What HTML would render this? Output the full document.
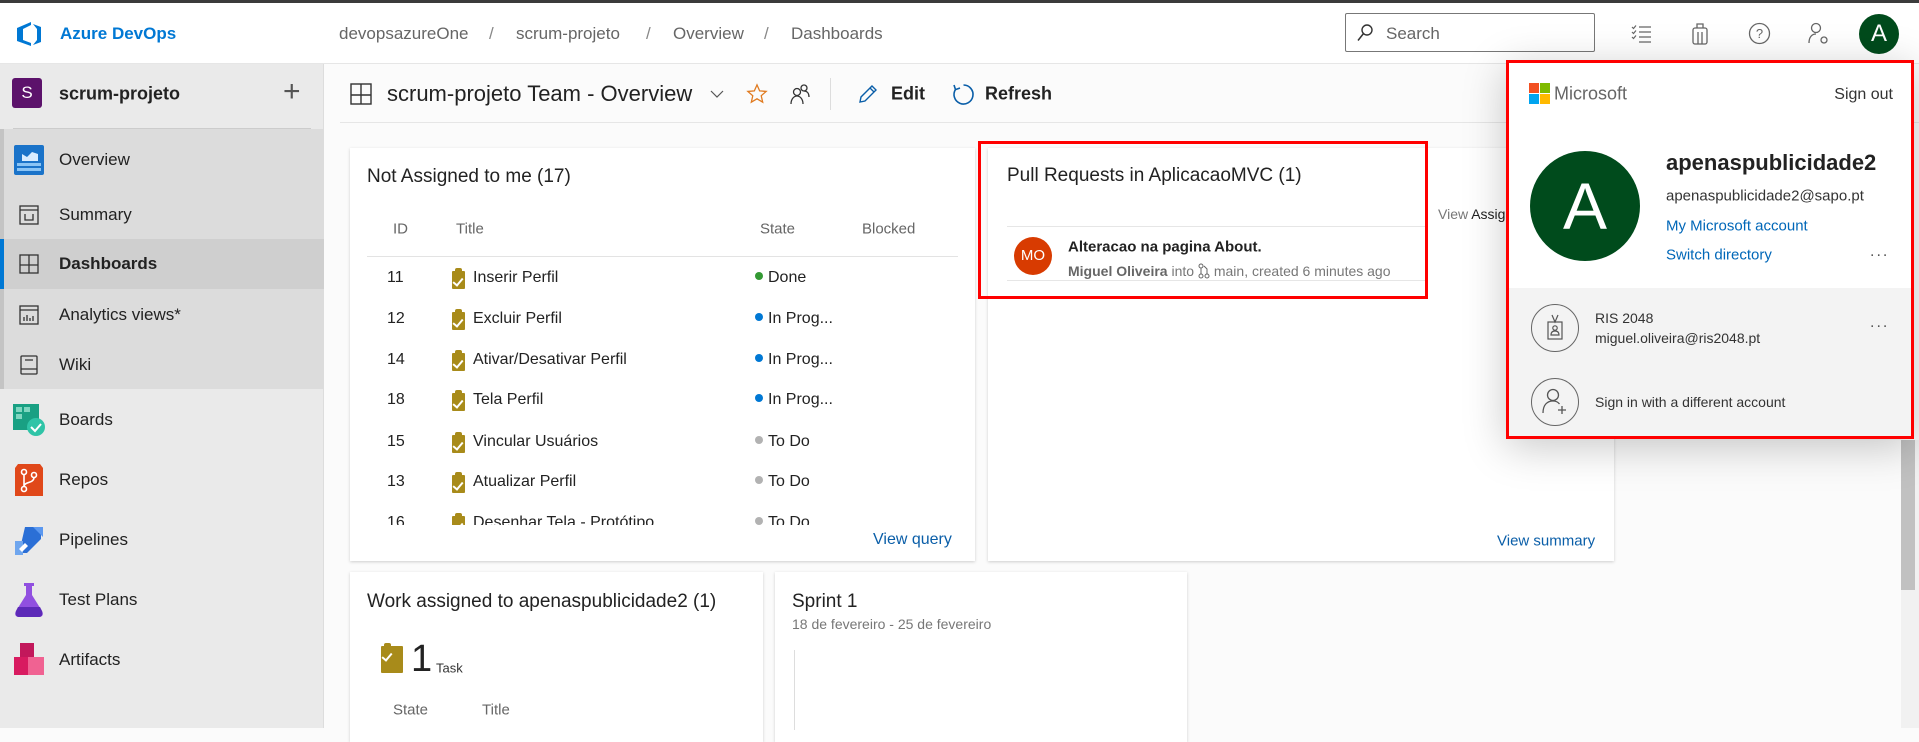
<!DOCTYPE html>
<html><head><meta charset="utf-8"><style>
*{margin:0;padding:0;box-sizing:border-box}
body{width:1919px;height:728px;overflow:hidden;position:relative;background:#fbfbfb;font-family:"Liberation Sans",sans-serif;color:#323130}
.a{position:absolute;white-space:nowrap}
.vc{transform:translateY(-50%)}
.card{position:absolute;background:#fff;box-shadow:0 1px 3px rgba(0,0,0,.18)}
.nav{position:absolute;left:59px;font-size:17px;color:#222;transform:translateY(-50%)}
.row{position:absolute;font-size:16px;color:#222;transform:translateY(-50%)}
.dot{display:inline-block;width:8px;height:8px;border-radius:50%;margin-right:5px;vertical-align:2px}
.chk{position:absolute;width:13px;height:18px;background:#a88b1a;border-radius:1px}
.chk:before{content:"";position:absolute;left:3px;top:-3px;width:7px;height:5px;background:#a88b1a;border-radius:2px 2px 0 0}
.chk:after{content:"";position:absolute;left:3px;top:5px;width:4px;height:8px;border:solid #fff;border-width:0 2px 2px 0;transform:rotate(40deg)}
</style></head><body>
<!-- top dark line -->
<div class="a" style="left:0;top:0;width:1919px;height:3px;background:#3b3b3b"></div>
<!-- header -->
<div class="a" style="left:0;top:3px;width:1919px;height:61px;background:#fff;border-bottom:1px solid #e6e6e6"></div>
<svg class="a" style="left:15px;top:21px" width="28" height="26" viewBox="0 0 28 26"><path d="M2 7 L16 1 L16 4 L8 8 L8 19 L16 22 L16 25 L2 20 Z" fill="#0078d4"/><path d="M18 3 L26 6 L26 21 L18 24 L22 19 L22 8 Z" fill="#0078d4"/></svg>
<div class="a vc" style="left:60px;top:34px;font-size:17px;font-weight:bold;color:#0078d4">Azure DevOps</div>
<div class="a vc" style="left:339px;top:34px;font-size:17px;color:#666">devopsazureOne</div>
<div class="a vc" style="left:489px;top:34px;font-size:17px;color:#888">/</div>
<div class="a vc" style="left:516px;top:34px;font-size:17px;color:#666">scrum-projeto</div>
<div class="a vc" style="left:646px;top:34px;font-size:17px;color:#888">/</div>
<div class="a vc" style="left:673px;top:34px;font-size:17px;color:#666">Overview</div>
<div class="a vc" style="left:764px;top:34px;font-size:17px;color:#888">/</div>
<div class="a vc" style="left:791px;top:34px;font-size:17px;color:#666">Dashboards</div>
<div class="a" style="left:1345px;top:13px;width:250px;height:39px;border:1px solid #777;border-radius:2px;background:#fff"></div>
<svg class="a" style="left:1357px;top:24px" width="16" height="18" viewBox="0 0 16 18"><circle cx="10" cy="6" r="5" fill="none" stroke="#333" stroke-width="1.4"/><path d="M6.5 9.5 L1 16.5" stroke="#333" stroke-width="1.5"/></svg>
<div class="a vc" style="left:1386px;top:34px;font-size:17px;color:#666">Search</div>
<svg class="a" style="left:1631px;top:24px" width="22" height="20" viewBox="0 0 22 20"><g stroke="#666" stroke-width="1.2" fill="none"><path d="M8 3h12M8 8h12M8 13h12M8 18h12"/><path d="M1 3l1.5 1.5L5 1.5M1 8l1.5 1.5L5 6.5M1 13l1.5 1.5L5 11.5"/></g></svg>
<svg class="a" style="left:1691px;top:22px" width="18" height="24" viewBox="0 0 18 24"><g stroke="#666" stroke-width="1.3" fill="none"><rect x="2" y="6" width="14" height="16" rx="2"/><path d="M6 6V2h6v4M7 22V10M11 22V10"/></g></svg>
<svg class="a" style="left:1748px;top:22px" width="23" height="23" viewBox="0 0 23 23"><circle cx="11.5" cy="11.5" r="10" fill="none" stroke="#666" stroke-width="1.3"/><text x="11.5" y="16" font-size="13" text-anchor="middle" fill="#666" font-family="Liberation Sans">?</text></svg>
<svg class="a" style="left:1808px;top:22px" width="22" height="24" viewBox="0 0 22 24"><g stroke="#666" stroke-width="1.3" fill="none"><circle cx="8" cy="6" r="4.5"/><path d="M1 21c0-6 3-9 7-9"/><circle cx="16" cy="18" r="3"/></g></svg>
<div class="a" style="left:1859px;top:14px;width:40px;height:40px;border-radius:50%;background:#004b1c;color:#fff;font-size:24px;text-align:center;line-height:40px">A</div>
<!-- sidebar -->
<div class="a" style="left:0;top:64px;width:324px;height:664px;background:#eaeaea;border-right:1px solid #ddd"></div>
<div class="a" style="left:12px;top:78px;width:30px;height:30px;border-radius:3px;background:#5c126b;color:#fff;font-size:17px;text-align:center;line-height:30px">S</div>
<div class="a vc" style="left:59px;top:94px;font-size:18px;font-weight:bold;color:#222">scrum-projeto</div>
<div class="a vc" style="left:283px;top:92px;font-size:30px;font-weight:300;color:#555">+</div>
<div class="a" style="left:13px;top:128px;width:298px;height:1px;background:#ccc"></div>
<div class="a" style="left:0;top:129px;width:324px;height:260px;background:#dcdcdc"></div>
<div class="a" style="left:0;top:129px;width:4px;height:260px;background:#c4c4c4"></div>
<div class="a" style="left:0;top:239px;width:324px;height:50px;background:#cfcfcf"></div>
<div class="a" style="left:0;top:239px;width:4px;height:50px;background:#0078d4"></div>
<svg class="a" style="left:14px;top:145px" width="30" height="30" viewBox="0 0 30 30"><rect x="0" y="0" width="30" height="30" rx="2" fill="#1a73c9"/><rect x="3" y="18" width="24" height="3" fill="#8ac4f5"/><rect x="3" y="23" width="24" height="3" fill="#8ac4f5"/><path d="M8 16V9l5 3 5-5 6 2v7z" fill="#d8ecff"/></svg>
<div class="nav" style="top:160px">Overview</div>
<svg class="a" style="left:19px;top:205px" width="20" height="20" viewBox="0 0 20 20"><g stroke="#333" stroke-width="1.3" fill="none"><rect x="1" y="1" width="18" height="18"/><path d="M1 5h18M6 9v6h8V9"/></g></svg>
<div class="nav" style="top:215px">Summary</div>
<svg class="a" style="left:19px;top:254px" width="20" height="20" viewBox="0 0 20 20"><g stroke="#333" stroke-width="1.3" fill="none"><rect x="1" y="1" width="18" height="18"/><path d="M10 1v18M1 11h18"/></g></svg>
<div class="nav" style="top:264px;font-weight:bold">Dashboards</div>
<svg class="a" style="left:19px;top:305px" width="20" height="20" viewBox="0 0 20 20"><g stroke="#333" stroke-width="1.3" fill="none"><rect x="1" y="1" width="18" height="18"/><path d="M1 5h18M5 16v-4M8 16v-6M11 16v-3M14 16v-5"/></g></svg>
<div class="nav" style="top:315px">Analytics views*</div>
<svg class="a" style="left:20px;top:355px" width="18" height="20" viewBox="0 0 18 20"><g stroke="#333" stroke-width="1.3" fill="none"><rect x="1" y="1" width="16" height="18" rx="1"/><path d="M1 14h16M5 5h8"/></g></svg>
<div class="nav" style="top:365px">Wiki</div>
<svg class="a" style="left:13px;top:404px" width="32" height="32" viewBox="0 0 32 32"><rect x="0" y="0" width="26" height="26" fill="#19a083"/><rect x="3" y="3" width="6" height="5" fill="#7fd6c0"/><rect x="11" y="3" width="6" height="5" fill="#7fd6c0"/><rect x="3" y="10" width="6" height="5" fill="#7fd6c0"/><circle cx="23" cy="23" r="9" fill="#2fc4a7"/><path d="M18 23l4 4 6-7" stroke="#fff" stroke-width="2" fill="none"/></svg>
<div class="nav" style="top:420px">Boards</div>
<svg class="a" style="left:15px;top:464px" width="28" height="32" viewBox="0 0 28 32"><path d="M3 0h22l3 4v28H0V4z" fill="#e0481a"/><g stroke="#fff" stroke-width="1.6" fill="none"><circle cx="9" cy="8" r="2.5"/><circle cx="19" cy="11" r="2.5"/><circle cx="9" cy="25" r="2.5"/><path d="M9 10.5v12M19 13.5c0 6-10 4-10 9"/></g></svg>
<div class="nav" style="top:480px">Repos</div>
<svg class="a" style="left:13px;top:523px" width="32" height="34" viewBox="0 0 32 34"><path d="M12 4h16v12L14 30H6z" fill="#2b6fd6"/><path d="M2 18h8v14H2z" fill="#6fa6ee"/><path d="M20 4h10v10z" fill="#5b98f0"/><path d="M6 26l6-6 3 3-6 6z" fill="#fff"/></svg>
<div class="nav" style="top:540px">Pipelines</div>
<svg class="a" style="left:14px;top:583px" width="30" height="34" viewBox="0 0 30 34"><path d="M10 0h10v3h-2v9l10 16c2 4 0 6-3 6H5c-3 0-5-2-3-6l10-16V3h-2z" fill="#9150e0"/><path d="M4 24h22l2 4c1 3 0 6-3 6H5c-3 0-4-3-3-6z" fill="#5d2ab8"/></svg>
<div class="nav" style="top:600px">Test Plans</div>
<svg class="a" style="left:14px;top:643px" width="30" height="32" viewBox="0 0 30 32"><rect x="6" y="0" width="14" height="14" fill="#c2185b"/><rect x="0" y="14" width="14" height="18" fill="#d81b60"/><rect x="14" y="14" width="16" height="18" fill="#f06292"/></svg>
<div class="nav" style="top:660px">Artifacts</div>
<!-- toolbar -->
<div class="a" style="left:340px;top:122px;width:1580px;height:1px;background:#e6e6e6"></div>
<svg class="a" style="left:350px;top:83px" width="22" height="22" viewBox="0 0 22 22"><g stroke="#333" stroke-width="1.4" fill="none"><rect x="1" y="1" width="20" height="20"/><path d="M11 1v20M1 12h20"/></g></svg>
<div class="a vc" style="left:387px;top:94px;font-size:22px;color:#222">scrum-projeto Team - Overview</div>
<svg class="a" style="left:710px;top:90px" width="14" height="9" viewBox="0 0 14 9"><path d="M1 1l6 6 6-6" stroke="#555" stroke-width="1.2" fill="none"/></svg>
<svg class="a" style="left:746px;top:83px" width="22" height="22" viewBox="0 0 24 24"><path d="M12 2l2.9 6.6 7.1.6-5.4 4.7 1.6 7-6.2-3.7-6.2 3.7 1.6-7L2 9.2l7.1-.6z" fill="none" stroke="#e07a1f" stroke-width="1.4"/></svg>
<svg class="a" style="left:789px;top:83px" width="22" height="22" viewBox="0 0 22 22"><g stroke="#333" stroke-width="1.3" fill="none"><circle cx="8" cy="9" r="3.5"/><path d="M2 21c0-5 3-8 6-8s6 3 6 8"/><circle cx="15" cy="5" r="3"/><path d="M15 8c3 0 5 2 5 6"/></g></svg>
<div class="a" style="left:830px;top:78px;width:1px;height:32px;background:#ddd"></div>
<svg class="a" style="left:857px;top:83px" width="22" height="22" viewBox="0 0 22 22"><path d="M3 19l1-5L15 3l4 4L8 18z M13 5l4 4" stroke="#0a5ea8" stroke-width="1.4" fill="none"/></svg>
<div class="a vc" style="left:891px;top:94px;font-size:18px;font-weight:bold;color:#222">Edit</div>
<svg class="a" style="left:952px;top:83px" width="23" height="23" viewBox="0 0 23 23"><path d="M11.5 2a9.5 9.5 0 1 1-8 4.4" stroke="#0a5ea8" stroke-width="1.6" fill="none"/><path d="M2 2l1.5 4.6L8 5" stroke="#0a5ea8" stroke-width="1.6" fill="none"/></svg>
<div class="a vc" style="left:985px;top:94px;font-size:18px;font-weight:bold;color:#222">Refresh</div>
<!-- card 1 -->
<div class="card" style="left:350px;top:148px;width:625px;height:413px"></div>
<div class="a vc" style="left:367px;top:177px;font-size:19px;color:#222">Not Assigned to me (17)</div>
<div class="row" style="left:393px;top:229px;font-size:15px;color:#666">ID</div>
<div class="row" style="left:456px;top:229px;font-size:15px;color:#666">Title</div>
<div class="row" style="left:760px;top:229px;font-size:15px;color:#666">State</div>
<div class="row" style="left:862px;top:229px;font-size:15px;color:#666">Blocked</div>
<div class="a" style="left:367px;top:256px;width:591px;height:1px;background:#e3e3e3"></div>
<div class="a" style="left:350px;top:263px;width:625px;height:262px;overflow:hidden">
<div class="row" style="left:37px;top:15px">11</div><div class="chk" style="left:102px;top:8px"></div><div class="row" style="left:123px;top:15px">Inserir Perfil</div><div class="row" style="left:405px;top:15px"><span class="dot" style="background:#339933"></span>Done</div>
<div class="row" style="left:37px;top:56px">12</div><div class="chk" style="left:102px;top:49px"></div><div class="row" style="left:123px;top:56px">Excluir Perfil</div><div class="row" style="left:405px;top:56px"><span class="dot" style="background:#0078d4"></span>In Prog...</div>
<div class="row" style="left:37px;top:97px">14</div><div class="chk" style="left:102px;top:90px"></div><div class="row" style="left:123px;top:97px">Ativar/Desativar Perfil</div><div class="row" style="left:405px;top:97px"><span class="dot" style="background:#0078d4"></span>In Prog...</div>
<div class="row" style="left:37px;top:137px">18</div><div class="chk" style="left:102px;top:130px"></div><div class="row" style="left:123px;top:137px">Tela Perfil</div><div class="row" style="left:405px;top:137px"><span class="dot" style="background:#0078d4"></span>In Prog...</div>
<div class="row" style="left:37px;top:179px">15</div><div class="chk" style="left:102px;top:172px"></div><div class="row" style="left:123px;top:179px">Vincular Usuários</div><div class="row" style="left:405px;top:179px"><span class="dot" style="background:#b2b2b2"></span>To Do</div>
<div class="row" style="left:37px;top:219px">13</div><div class="chk" style="left:102px;top:212px"></div><div class="row" style="left:123px;top:219px">Atualizar Perfil</div><div class="row" style="left:405px;top:219px"><span class="dot" style="background:#b2b2b2"></span>To Do</div>
<div class="row" style="left:37px;top:260px">16</div><div class="chk" style="left:102px;top:253px"></div><div class="row" style="left:123px;top:260px">Desenhar Tela - Protótipo</div><div class="row" style="left:405px;top:260px"><span class="dot" style="background:#b2b2b2"></span>To Do</div>
</div>
<div class="a vc" style="left:873px;top:540px;font-size:16px;color:#0a5ea8">View query</div>
<!-- card 2 -->
<div class="card" style="left:988px;top:148px;width:626px;height:413px"></div>
<div class="a vc" style="left:1007px;top:176px;font-size:19px;color:#222">Pull Requests in AplicacaoMVC (1)</div>
<div class="a vc" style="left:1438px;top:214px;font-size:14px;color:#777">View <span style="color:#222">Assigned</span></div>
<div class="a" style="left:1007px;top:226px;width:420px;height:1px;background:#e6e6e6"></div>
<div class="a" style="left:1007px;top:280px;width:420px;height:1px;background:#e6e6e6"></div>
<div class="a" style="left:1014px;top:237px;width:38px;height:38px;border-radius:50%;background:#d83b01;color:#fff;font-size:15px;text-align:center;line-height:38px">MO</div>
<div class="a vc" style="left:1068px;top:247px;font-size:15px;font-weight:bold;color:#222">Alteracao na pagina About.</div>
<div class="a vc" style="left:1068px;top:271px;font-size:14px;color:#777"><b style="color:#666">Miguel Oliveira</b> into <svg width="12" height="16" viewBox="0 0 12 16" style="vertical-align:-3px"><g stroke="#666" stroke-width="1" fill="none"><circle cx="3" cy="3" r="2"/><circle cx="3" cy="13" r="2"/><circle cx="9" cy="13" r="2"/><path d="M3 5v6M9 11V6L6 3"/></g></svg> main, created 6 minutes ago</div>
<div class="a" style="left:978px;top:141px;width:450px;height:158px;border:3px solid #f00"></div>
<div class="a vc" style="left:1497px;top:541px;font-size:15px;color:#0a5ea8">View summary</div>
<!-- bottom cards -->
<div class="card" style="left:350px;top:572px;width:413px;height:170px"></div>
<div class="a vc" style="left:367px;top:602px;font-size:19px;color:#222">Work assigned to apenaspublicidade2 (1)</div>
<div class="chk" style="left:381px;top:646px;width:22px;height:27px"></div>
<div class="a" style="left:411px;top:640px;font-size:38px;color:#222;line-height:38px">1</div>
<div class="a vc" style="left:436px;top:668px;font-size:13px;color:#333">Task</div>
<div class="a vc" style="left:393px;top:710px;font-size:15px;color:#666">State</div>
<div class="a vc" style="left:482px;top:710px;font-size:15px;color:#666">Title</div>
<div class="card" style="left:775px;top:572px;width:412px;height:170px"></div>
<div class="a vc" style="left:792px;top:602px;font-size:19px;color:#222">Sprint 1</div>
<div class="a vc" style="left:792px;top:624px;font-size:14px;color:#777">18 de fevereiro - 25 de fevereiro</div>
<div class="a" style="left:794px;top:650px;width:1px;height:80px;background:#ddd"></div>
<!-- scrollbar -->
<div class="a" style="left:1901px;top:440px;width:18px;height:288px;background:#f1f1f1"></div>
<div class="a" style="left:1901px;top:440px;width:14px;height:150px;background:#c1c1c1"></div>
<!-- popup -->
<div class="a" style="left:1506px;top:60px;width:408px;height:379px;background:#fff;box-shadow:0 8px 40px rgba(0,0,0,.22)"></div>
<div class="a" style="left:1506px;top:288px;width:408px;height:151px;background:#f3f3f3"></div>
<svg class="a" style="left:1529px;top:83px" width="21" height="21" viewBox="0 0 21 21"><rect width="10" height="10" fill="#f25022"/><rect x="11" width="10" height="10" fill="#7fba00"/><rect y="11" width="10" height="10" fill="#00a4ef"/><rect x="11" y="11" width="10" height="10" fill="#ffb900"/></svg>
<div class="a vc" style="left:1554px;top:94px;font-size:18px;color:#666">Microsoft</div>
<div class="a vc" style="right:26px;top:95px;font-size:16px;color:#333">Sign out</div>
<div class="a" style="left:1530px;top:151px;width:110px;height:110px;border-radius:50%;background:#004b1c;color:#fff;font-size:66px;text-align:center;line-height:110px">A</div>
<div class="a vc" style="left:1666px;top:163px;font-size:22px;font-weight:bold;color:#222">apenaspublicidade2</div>
<div class="a vc" style="left:1666px;top:196px;font-size:15px;color:#333">apenaspublicidade2@sapo.pt</div>
<div class="a vc" style="left:1666px;top:226px;font-size:15px;color:#0067b8">My Microsoft account</div>
<div class="a vc" style="left:1666px;top:255px;font-size:15px;color:#0067b8">Switch directory</div>
<div class="a vc" style="left:1870px;top:252px;font-size:16px;color:#555;letter-spacing:2px">...</div>
<div class="a" style="left:1531px;top:304px;width:48px;height:48px;border-radius:50%;border:1.3px solid #666"></div>
<svg class="a" style="left:1545px;top:313px" width="20" height="28" viewBox="0 0 20 28"><g stroke="#555" stroke-width="1.2" fill="none"><rect x="3" y="9" width="14" height="17"/><path d="M7 2l3 7 3-7"/><circle cx="10" cy="15" r="2.2"/><path d="M6 22c0-3 2-4 4-4s4 1 4 4z"/></g></svg>
<div class="a vc" style="left:1595px;top:318px;font-size:14px;color:#333">RIS 2048</div>
<div class="a vc" style="left:1595px;top:338px;font-size:14px;color:#333">miguel.oliveira@ris2048.pt</div>
<div class="a vc" style="left:1870px;top:323px;font-size:16px;color:#555;letter-spacing:2px">...</div>
<div class="a" style="left:1531px;top:378px;width:48px;height:48px;border-radius:50%;border:1.3px solid #666"></div>
<svg class="a" style="left:1542px;top:387px" width="26" height="30" viewBox="0 0 26 30"><g stroke="#555" stroke-width="1.3" fill="none"><circle cx="11" cy="8" r="5.5"/><path d="M1 26c0-8 4-12 10-12 3 0 5 1 6.5 3"/><path d="M20 19v8M16 23h8"/></g></svg>
<div class="a vc" style="left:1595px;top:402px;font-size:14px;color:#333">Sign in with a different account</div>
<div class="a" style="left:1506px;top:60px;width:408px;height:379px;border:3px solid #f00"></div>
</body></html>
